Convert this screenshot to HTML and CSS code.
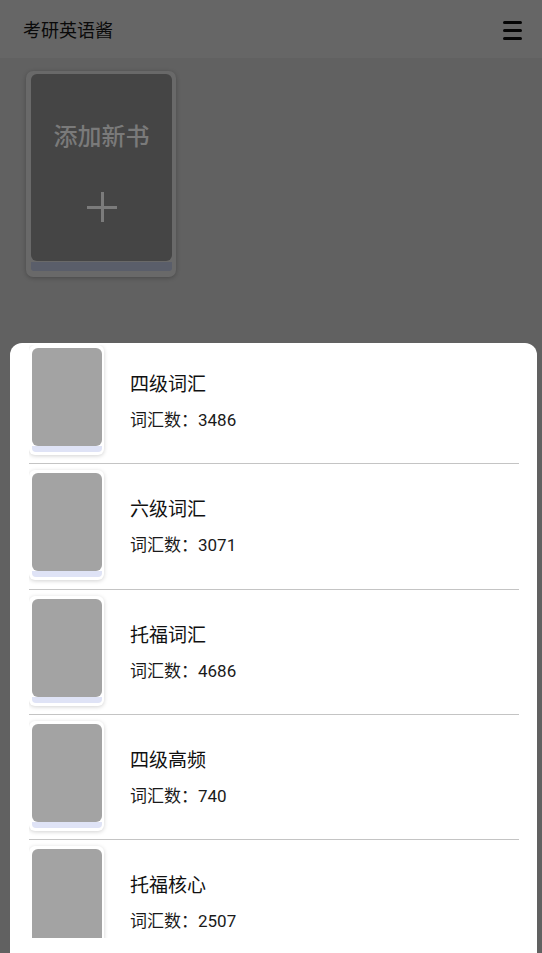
FILE: index.html
```html
<!DOCTYPE html>
<html lang="zh-CN">
<head>
<meta charset="utf-8">
<title>考研英语酱</title>
<link rel="stylesheet" href="styles.css">
</head>
<body>
<header class="topbar">
  <h1 class="title">考研英语酱</h1>
  <button class="menu" aria-label="菜单"><span></span><span></span><span></span></button>
</header>
<main class="shelf">
  <div class="add-book">
    <div class="add-cover">
      <div class="add-label">添加新书</div>
      <div class="add-plus"></div>
    </div>
    <div class="add-strip"></div>
  </div>
</main>
<section class="sheet">
  <ul class="book-list">
    <li class="book">
      <div class="cover-card"><div class="cover"></div><div class="cover-strip"></div></div>
      <div class="info"><div class="name">四级词汇</div><div class="count">词汇数：3486</div></div>
    </li>
    <li class="book">
      <div class="cover-card"><div class="cover"></div><div class="cover-strip"></div></div>
      <div class="info"><div class="name">六级词汇</div><div class="count">词汇数：3071</div></div>
    </li>
    <li class="book">
      <div class="cover-card"><div class="cover"></div><div class="cover-strip"></div></div>
      <div class="info"><div class="name">托福词汇</div><div class="count">词汇数：4686</div></div>
    </li>
    <li class="book">
      <div class="cover-card"><div class="cover"></div><div class="cover-strip"></div></div>
      <div class="info"><div class="name">四级高频</div><div class="count">词汇数：740</div></div>
    </li>
    <li class="book">
      <div class="cover-card"><div class="cover"></div><div class="cover-strip"></div></div>
      <div class="info"><div class="name">托福核心</div><div class="count">词汇数：2507</div></div>
    </li>
  </ul>
</section>
</body>
</html>
```

FILE: styles.css
```css
* { box-sizing: border-box; }
html, body {
  margin: 0;
  padding: 0;
  height: 100%;
}
body {
  background: #616161;
  font-family: "Noto Sans CJK SC", "Noto Sans", sans-serif;
  overflow: hidden;
}
.topbar {
  height: 58px;
  background: #666666;
  display: flex;
  align-items: center;
  justify-content: space-between;
  padding: 0 19px 0 23px;
}
.title {
  margin: 0;
  font-size: 18px;
  font-weight: normal;
  color: #0a0a0a;
}
.menu {
  border: 0;
  background: none;
  padding: 0;
  width: 20px;
  display: flex;
  flex-direction: column;
  gap: 5px;
  margin-top: 3px;
}
.menu span {
  display: block;
  height: 3px;
  width: 19px;
  background: #050505;
  border-radius: 1.5px;
}
.shelf {
  padding: 13px 0 0 26px;
}
.add-book {
  width: 150px;
  padding: 3px 4px 6px 5px;
  background: #696969;
  border-radius: 7px;
  box-shadow: 0 1px 4px rgba(0,0,0,0.25);
}
.add-cover {
  height: 187px;
  background: #454545;
  border-radius: 6px;
  display: flex;
  flex-direction: column;
  align-items: center;
  padding-top: 44px;
}
.add-label {
  font-size: 24px;
  line-height: 34px;
  font-weight: 500;
  color: #7a7a7a;
}
.add-plus {
  position: relative;
  width: 30px;
  height: 30px;
  margin-top: 40px;
}
.add-plus::before,
.add-plus::after {
  content: "";
  position: absolute;
  background: #7b7b7b;
}
.add-plus::before {
  left: 0; right: 0; top: 14px; height: 3px;
}
.add-plus::after {
  top: 0; bottom: 0; left: 14px; width: 3px;
}
.add-strip {
  height: 9px;
  margin-top: 1px;
  background: #5a5e6a;
  border-radius: 0 0 3px 3px;
}
.sheet {
  position: absolute;
  top: 343px;
  left: 10px;
  right: 5px;
  bottom: 0;
  background: #ffffff;
  border-radius: 12px 12px 0 0;
  padding: 2px 18px 15px 19px;
  display: flex;
  flex-direction: column;
}
.book-list {
  list-style: none;
  margin: 0;
  padding: 0;
  flex: 1;
  overflow: hidden;
}
.book {
  display: flex;
  align-items: center;
  padding: 6px 0 8.3px;
  border-bottom: 1px solid #c4c4c4;
}
.book:first-child {
  padding-top: 0;
}
.cover-card {
  width: 75px;
  padding: 3px 2px 3px 3px;
  background: #ffffff;
  border-radius: 6px;
  box-shadow: 0 1px 4px rgba(0,0,0,0.18);
  flex: none;
}
.cover {
  height: 98px;
  background: #a3a3a3;
  border-radius: 6px;
}
.cover-strip {
  height: 6px;
  background: #dfe3f6;
  border-radius: 0 0 4px 4px;
}
.info {
  margin-left: 26px;
  padding-top: 3px;
  display: flex;
  flex-direction: column;
}
.name {
  font-size: 19px;
  line-height: 26px;
  color: #111111;
}
.count {
  margin-top: 11px;
  font-family: Roboto, "Noto Sans CJK SC", sans-serif;
  font-size: 17px;
  line-height: 26px;
  color: #1a1a1a;
}
```
